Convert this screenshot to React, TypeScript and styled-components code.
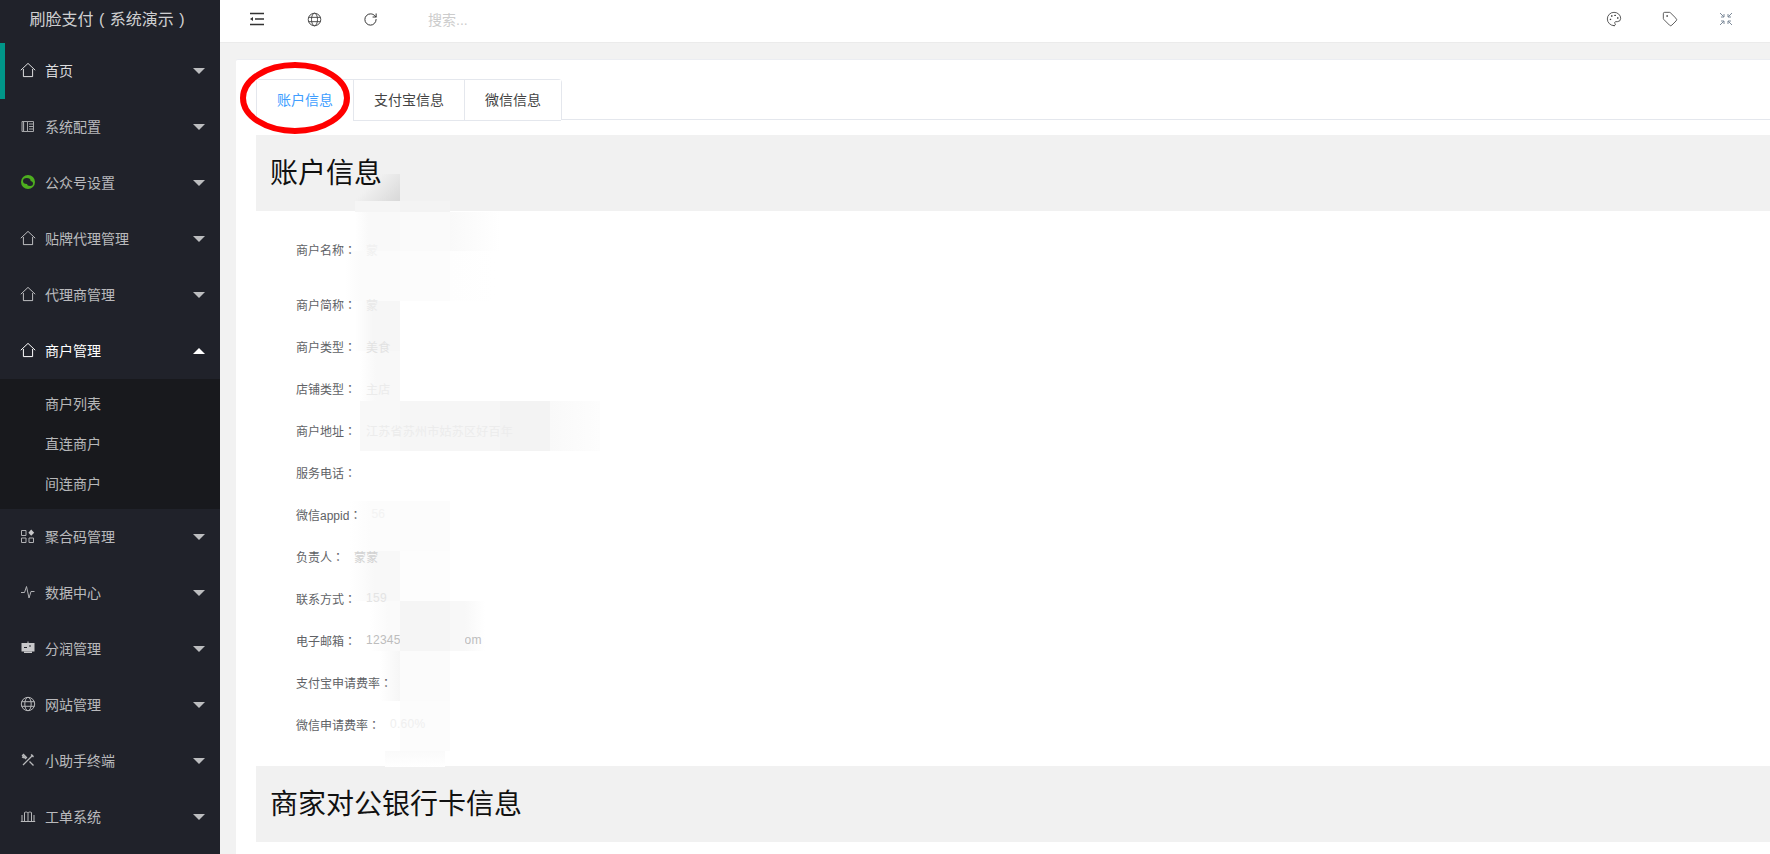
import React from "react";
import styled, { createGlobalStyle } from "styled-components";
import { Palette, RotateCw, Tag } from "lucide-react";

const GlobalStyle = createGlobalStyle`
  html, body {
    margin: 0;
    padding: 0;
    height: 100%;
    overflow: hidden;
  }
  body {
    font-family: "Liberation Sans", "Noto Sans CJK SC", sans-serif;
    background: #f2f2f2;
  }
`;

const Layout = styled.div`
  display: flex;
  width: 1770px;
  height: 854px;
  overflow: hidden;
`;

const Sidebar = styled.aside`
  width: 220px;
  flex-shrink: 0;
  background: #20222a;
  color: rgba(255, 255, 255, 0.7);
`;

const Logo = styled.div`
  height: 43px;
  padding: 0 6px 7px 0;
  box-sizing: border-box;
  display: flex;
  align-items: center;
  justify-content: center;
  font-size: 16px;
  word-spacing: 1px;
  white-space: pre;
  color: rgba(255, 255, 255, 0.8);
`;

const MenuItem = styled.div<{ $active?: boolean; $open?: boolean }>`
  position: relative;
  height: 56px;
  box-sizing: border-box;
  display: flex;
  align-items: center;
  padding-bottom: 2px;
  font-size: 14px;
  color: ${(p) =>
    p.$open ? "#fff" : p.$active ? "rgba(255,255,255,.85)" : "rgba(255,255,255,.7)"};
  border-left: ${(p) => (p.$active ? "5px solid #009688" : "0 solid transparent")};
  padding-left: ${(p) => (p.$active ? "15px" : "20px")};
`;

const MenuIcon = styled.span`
  width: 16px;
  height: 16px;
  margin-right: 9px;
  display: flex;
  align-items: center;
  justify-content: center;
`;

const Arrow = styled.span<{ $up?: boolean }>`
  position: absolute;
  right: 15px;
  top: 25px;
  width: 0;
  height: 0;
  border-left: 6px solid transparent;
  border-right: 6px solid transparent;
  border-top: ${(p) => (p.$up ? "0" : "6px solid rgba(255,255,255,.7)")};
  border-bottom: ${(p) => (p.$up ? "6px solid #fff" : "0")};
`;

const SubMenu = styled.div`
  background: #18191d;
  padding: 5px 0;
`;

const SubItem = styled.div`
  height: 40px;
  box-sizing: border-box;
  padding: 0 0 2px 45px;
  display: flex;
  align-items: center;
  font-size: 14px;
  color: rgba(255, 255, 255, 0.7);
`;

const Main = styled.main`
  flex: 1;
  min-width: 0;
  display: flex;
  flex-direction: column;
`;

const Topbar = styled.header`
  height: 43px;
  flex-shrink: 0;
  box-sizing: border-box;
  background: #fff;
  border-bottom: 1px solid #ebebeb;
  display: flex;
  align-items: center;
  padding-bottom: 4px;
`;

const TopIcon = styled.span<{ $w: number; $muted?: boolean }>`
  width: ${(p) => p.$w}px;
  display: flex;
  justify-content: center;
  color: ${(p) => (p.$muted ? "#7d8a99" : "#333")};
`;

const Search = styled.span`
  margin-left: 22px;
  font-size: 14px;
  color: #ccc;
  flex: 1;
`;

const Content = styled.div`
  flex: 1;
  min-height: 0;
  padding: 16px 0 0 16px;
  overflow: hidden;
`;

const Card = styled.section`
  position: relative;
  background: #fff;
  border-radius: 2px 0 0 0;
  border-top: 1px solid #ebedf2;
  box-sizing: border-box;
  height: 100%;
  padding: 19px 0 0 20px;
`;

const TabBar = styled.div`
  display: flex;
  height: 41px;
  box-sizing: border-box;
  border-bottom: 1px solid #e4e7ed;
`;

const TabGroup = styled.div`
  display: flex;
  height: 41px;
  box-sizing: border-box;
  border: 1px solid #e4e7ed;
  border-bottom: 0;
  border-radius: 4px 4px 0 0;
`;

const Tab = styled.div<{ $active?: boolean }>`
  padding: 0 20px 2px;
  display: flex;
  align-items: center;
  font-size: 14px;
  box-sizing: border-box;
  color: ${(p) => (p.$active ? "#409eff" : "#444")};
  background: #fff;
  border-left: ${(p) => (p.$active ? "0" : "1px solid #e4e7ed")};
  border-bottom: ${(p) => (p.$active ? "1px solid #fff" : "1px solid #e4e7ed")};
  height: 41px;
`;

const SectionTitle = styled.h2`
  margin: 15px 0 0;
  height: 76px;
  padding: 0 0 4px 14px;
  box-sizing: border-box;
  display: flex;
  align-items: center;
  background: #f1f1f1;
  font-size: 28px;
  font-weight: 400;
  color: #111;
`;

const TitleText = styled.span`
  position: relative;
  z-index: 1;
`;

const FormList = styled.div`
  padding: 17px 0 6px 40px;
`;

const FormRow = styled.div`
  position: relative;
  z-index: 1;
  height: 42px;
  display: flex;
  align-items: center;
  font-size: 12px;
  color: #606266;
  &:first-child {
    margin-bottom: 13px;
  }
`;

const Colon = styled.span`
  font-family: "Noto Sans CJK TC", sans-serif;
`;

const Value = styled.span<{ $tone: string }>`
  margin-left: 10px;
  color: ${(p) => p.$tone};
  letter-spacing: 0.25px;
`;

const Mosaic = styled.div<{ $x: number; $y: number; $w: number; $h: number; $bg: string; $over?: boolean }>`
  position: absolute;
  z-index: ${(p) => (p.$over ? 2 : 0)};
  left: ${(p) => p.$x - 236}px;
  top: ${(p) => p.$y - 59}px;
  width: ${(p) => p.$w}px;
  height: ${(p) => p.$h}px;
  background: ${(p) => p.$bg};
  pointer-events: none;
`;

const Circle = styled.svg`
  position: absolute;
  z-index: 3;
  left: 3px;
  top: 0px;
  width: 112px;
  height: 76px;
  overflow: visible;
`;

const HomeIcon = () => (
  <svg width="16" height="16" viewBox="0 0 16 16" fill="none" stroke="currentColor" strokeWidth="1">
    <path d="M0.8 8.2 8 1.4l7.2 6.8M3.4 7v7.6h9.2V7" />
  </svg>
);

const ConfigIcon = () => (
  <svg width="16" height="16" viewBox="0 0 16 16" fill="none" stroke="#a6a7aa" strokeWidth="1">
    <path d="M2 3.500h5.500v10H2zM7.500 3.500h6v10h-6z" />
    <path d="M3.500 3v11M9 6h4M9 8.500h4M9 11h4" strokeWidth="1.2" />
  </svg>
);

const WechatIcon = () => (
  <svg width="16" height="16" viewBox="0 0 16 16">
    <circle cx="8" cy="8" r="7" fill="#4dae1f" />
    <ellipse cx="6.800" cy="7" rx="3.800" ry="3" fill="#20222a" />
    <ellipse cx="10" cy="9.400" rx="3" ry="2.500" fill="#20222a" />
  </svg>
);

const CodeIcon = () => (
  <svg width="16" height="16" viewBox="0 0 16 16" fill="none" stroke="#b0b1b4" strokeWidth="1">
    <path d="M1.500 2.500h4.500v5h-4.500zM1.500 10h4.500v4.500h-4.500zM9 10h4.500v4.500H9z" />
    <path d="M11.200 1.500 14.200 4.700 11.200 7.800 8.400 4.700z" fill="#c8c8ca" stroke="none" />
  </svg>
);

const PulseIcon = () => (
  <svg width="16" height="16" viewBox="0 0 16 16" fill="none" stroke="#b0b1b4" strokeWidth="1">
    <path d="M1 8.500h3.500L6.500 2.500 9 14l2-6.500h3.500" />
  </svg>
);

const MonitorIcon = () => (
  <svg width="16" height="16" viewBox="0 0 16 16">
    <path d="M1.500 3h13v8.500h-13z" fill="#c8c8ca" />
    <path d="M7.500 1.500h1V3h-1zM4 11.500h8V13H4z" fill="#c8c8ca" />
    <path d="M4 7.500h3M9 6h2" stroke="#20222a" strokeWidth="1" />
  </svg>
);

const GlobeIcon = ({ color = "#b8b9bb", size = 16 }: { color?: string; size?: number }) => (
  <svg width={size} height={size} viewBox="0 0 16 16" fill="none" stroke={color} strokeWidth="1">
    <circle cx="8" cy="8" r="6.700" />
    <ellipse cx="8" cy="8" rx="3.200" ry="6.700" />
    <path d="M1.500 5.700h13M1.500 10.300h13" />
  </svg>
);

const ToolsIcon = () => (
  <svg width="16" height="16" viewBox="0 0 16 16" fill="none" stroke="#b8b9bb" strokeWidth="1.300">
    <path d="M3 13 13 3M2.500 3.500l1-1 3 3-1 1zM9.500 9.500l4 4M2 5l2 1" />
    <path d="M11 2.500l2.500 2.500" />
  </svg>
);

const BookIcon = () => (
  <svg width="16" height="16" viewBox="0 0 16 16" fill="none" stroke="#b8b9bb" strokeWidth="1">
    <path d="M0.800 13.500h14.400M2 13.500V7M4.500 13V4.500c1.500-.7 2.500-.5 3.500.3.900-.8 2-1 3.500-.3V13M8 5v8M14 13.500V7" />
  </svg>
);

const ShrinkMenuIcon = () => (
  <svg width="16" height="16" viewBox="0 0 16 16" fill="none" stroke="#333" strokeWidth="1.300">
    <path d="M1 2.500h14M6 8h9M1 13.500h14" />
    <path d="M4 6v4L1 8z" fill="#333" stroke="none" />
  </svg>
);

const ScreenIcon = () => (
  <svg width="14" height="14" viewBox="0 0 14 14" fill="none" stroke="currentColor" strokeWidth="1">
    <path d="M1 1l4 4M5 2v3H2M13 1 9 5M9 2v3h3M1 13l4-4M2 9h3v3M13 13 9 9M9 12V9h3" />
  </svg>
);

type MenuEntry = { label: string; icon: React.ReactNode; active?: boolean; open?: boolean };

const menus: MenuEntry[] = [
  { label: "首页", icon: <HomeIcon />, active: true },
  { label: "系统配置", icon: <ConfigIcon /> },
  { label: "公众号设置", icon: <WechatIcon /> },
  { label: "贴牌代理管理", icon: <HomeIcon /> },
  { label: "代理商管理", icon: <HomeIcon /> },
  { label: "商户管理", icon: <HomeIcon />, open: true },
  { label: "聚合码管理", icon: <CodeIcon /> },
  { label: "数据中心", icon: <PulseIcon /> },
  { label: "分润管理", icon: <MonitorIcon /> },
  { label: "网站管理", icon: <GlobeIcon /> },
  { label: "小助手终端", icon: <ToolsIcon /> },
  { label: "工单系统", icon: <BookIcon /> },
];

const subMenus = ["商户列表", "直连商户", "间连商户"];

const fields = [
  { label: "商户名称", value: "蒙", tone: "#f1f1f1" },
  { label: "商户简称", value: "蒙", tone: "#e9e9e9" },
  { label: "商户类型", value: "美食", tone: "#e2e2e2" },
  { label: "店铺类型", value: "主店", tone: "#ebebeb" },
  { label: "商户地址", value: "江苏省苏州市姑苏区好百年", tone: "#ececec" },
  { label: "服务电话", value: "", tone: "#ddd" },
  { label: "微信appid", value: "56", tone: "#f3f3f3" },
  { label: "负责人", value: "蒙蒙", tone: "#d2d2d2" },
  { label: "联系方式", value: "159", tone: "#e4e4e4" },
  { label: "电子邮箱", value: "123456789@qq.com", tone: "#bdbdbd" },
  { label: "支付宝申请费率", value: "", tone: "#ddd" },
  { label: "微信申请费率", value: "0.60%", tone: "#efefef" },
];

// 打码区域
const mosaics = [
  { x: 350, y: 173, w: 50, h: 27, bg: "linear-gradient(135deg,#f1f1f1 40%,#d8d8d8)" },
  { x: 355, y: 200, w: 45, h: 11, bg: "#f5f5f5" },
  { x: 400, y: 200, w: 50, h: 11, bg: "#f3f3f3" },
  { x: 355, y: 211, w: 45, h: 39, bg: "linear-gradient(90deg,#fff,#f9f9f9 30%)" },
  { x: 400, y: 211, w: 50, h: 39, bg: "#fafafa" },
  { x: 450, y: 211, w: 50, h: 39, bg: "linear-gradient(90deg,#f9f9f9,#fff)" },
  { x: 345, y: 250, w: 55, h: 50, bg: "linear-gradient(90deg,#fff,#fbfbfb 30%)" },
  { x: 400, y: 250, w: 50, h: 50, bg: "#fcfcfc" },
  { x: 450, y: 250, w: 45, h: 50, bg: "linear-gradient(90deg,#fefefe,#fff)" },
  { x: 355, y: 300, w: 45, h: 50, bg: "linear-gradient(90deg,#fff,#f6f6f6 40%)" },
  { x: 360, y: 350, w: 40, h: 50, bg: "linear-gradient(90deg,#fff,#f8f8f8 40%)" },
  { x: 360, y: 400, w: 40, h: 50, bg: "#f8f8f8" },
  { x: 400, y: 400, w: 100, h: 50, bg: "#f6f6f6" },
  { x: 500, y: 400, w: 50, h: 50, bg: "#f3f3f3" },
  { x: 550, y: 400, w: 50, h: 50, bg: "linear-gradient(90deg,#f9f9f9,#fdfdfd)" },
  { x: 350, y: 500, w: 50, h: 50, bg: "linear-gradient(90deg,#fff,#fcfcfc 40%)" },
  { x: 400, y: 500, w: 50, h: 50, bg: "#fcfcfc" },
  { x: 350, y: 550, w: 50, h: 50, bg: "linear-gradient(90deg,#fff,#f8f8f8 50%)" },
  { x: 400, y: 550, w: 50, h: 50, bg: "#fdfdfd" },
  { x: 370, y: 600, w: 30, h: 50, bg: "linear-gradient(90deg,#fff,#fafafa 60%)" },
  { x: 400, y: 600, w: 50, h: 50, bg: "#f5f5f5", over: true },
  { x: 450, y: 600, w: 15, h: 50, bg: "#f8f8f8", over: true },
  { x: 465, y: 600, w: 20, h: 50, bg: "linear-gradient(90deg,#f8f8f8,#fff)" },
  { x: 380, y: 650, w: 20, h: 50, bg: "linear-gradient(90deg,#fff,#f6f6f6)" },
  { x: 400, y: 650, w: 50, h: 50, bg: "#fbfbfb" },
  { x: 400, y: 700, w: 50, h: 50, bg: "#fcfcfc" },
  { x: 385, y: 750, w: 60, h: 16, bg: "linear-gradient(#fafafa,#fff)" },
];

const App = () => (
  <Layout>
    <GlobalStyle />
    <Sidebar>
      <Logo>刷脸支付 ( 系统演示 )</Logo>
      {menus.map((item) => (
        <React.Fragment key={item.label}>
          <MenuItem $active={item.active} $open={item.open}>
            <MenuIcon>{item.icon}</MenuIcon>
            {item.label}
            <Arrow $up={item.open} />
          </MenuItem>
          {item.open && (
            <SubMenu>
              {subMenus.map((sub) => (
                <SubItem key={sub}>{sub}</SubItem>
              ))}
            </SubMenu>
          )}
        </React.Fragment>
      ))}
    </Sidebar>
    <Main>
      <Topbar>
        <TopIcon $w={74}>
          <ShrinkMenuIcon />
        </TopIcon>
        <TopIcon $w={40}>
          <GlobeIcon color="#444" size={15} />
        </TopIcon>
        <TopIcon $w={72}>
          <RotateCw size={15} strokeWidth={1.6} />
        </TopIcon>
        <Search>搜索...</Search>
        <TopIcon $w={56}>
          <Palette size={16} strokeWidth={1.2} />
        </TopIcon>
        <TopIcon $w={56}>
          <Tag size={16} strokeWidth={1.2} />
        </TopIcon>
        <TopIcon $w={56} $muted>
          <ScreenIcon />
        </TopIcon>
        <TopIcon $w={16} />
      </Topbar>
      <Content>
        <Card>
          <TabBar>
            <TabGroup>
              <Tab $active>账户信息</Tab>
              <Tab>支付宝信息</Tab>
              <Tab>微信信息</Tab>
            </TabGroup>
          </TabBar>
          <SectionTitle>
            <TitleText>账户信息</TitleText>
          </SectionTitle>
          <FormList>
            {fields.map((f) => (
              <FormRow key={f.label}>
                {f.label}
                <Colon>：</Colon>
                <Value $tone={f.tone}>{f.value}</Value>
              </FormRow>
            ))}
          </FormList>
          <SectionTitle>
            <TitleText>商家对公银行卡信息</TitleText>
          </SectionTitle>
          {mosaics.map((m) => (
            <Mosaic key={`${m.x}-${m.y}`} $x={m.x} $y={m.y} $w={m.w} $h={m.h} $bg={m.bg} $over={m.over} />
          ))}
          <Circle viewBox="0 0 112 76">
            <ellipse cx="56" cy="38" rx="52" ry="33" fill="none" stroke="#f00" strokeWidth="6" />
          </Circle>
        </Card>
      </Content>
    </Main>
  </Layout>
);

export default App;
